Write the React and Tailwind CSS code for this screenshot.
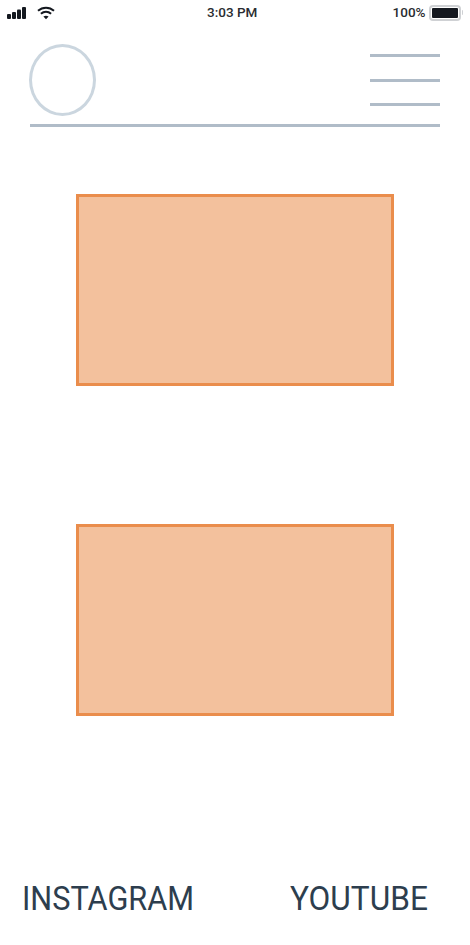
function SignalIcon() {
  return (
    <svg width="20" height="14" viewBox="0 0 20 14" fill="#14181f">
      <rect x="0" y="8" width="4" height="5" rx="1" />
      <rect x="5" y="6" width="4" height="7" rx="1" />
      <rect x="10" y="3.5" width="4" height="9.5" rx="1" />
      <rect x="15" y="1" width="4" height="12" rx="1" />
    </svg>
  )
}

function WifiIcon() {
  return (
    <svg width="18" height="14" viewBox="0 0 18 14" fill="none" stroke="#14181f" strokeWidth="2">
      <path d="M1 4.8C5.6 .6 12.4 .6 17 4.8" />
      <path d="M3.9 7.8C6.9 5.2 11.1 5.2 14.1 7.8" />
      <path d="M9 13.2 6.4 10.6C8 9.4 10 9.4 11.6 10.6Z" fill="#14181f" stroke="none" />
    </svg>
  )
}

function BatteryIcon() {
  return (
    <div className="flex items-center">
      <div className="h-[16px] w-[32px] rounded-[4px] border-2 border-[#cfd1d4] p-[1px]">
        <div className="h-full w-full rounded-[1px] bg-[#14181f]" />
      </div>
      <div className="ml-[1px] h-[5px] w-[1.5px] rounded-r bg-[#cfd1d4]" />
    </div>
  )
}

function OrangeBox() {
  return <div className="h-[192px] w-[318px] border-[3px] border-[#ea8d4c] bg-[#f3c19d]" />
}

export default function App() {
  return (
    <div className="flex h-[945px] w-[470px] flex-col overflow-hidden bg-white font-['Roboto',sans-serif]">
      {/* status bar */}
      <div className="relative flex h-[26px] items-center justify-between pl-[7px] pr-[7px] pb-[1px]">
        <div className="flex items-center gap-[10px]">
          <SignalIcon />
          <WifiIcon />
        </div>
        <span className="absolute left-[207px] text-[13.5px] font-medium text-[#2a2d31]">3:03 PM</span>
        <div className="flex items-center gap-[3px]">
          <span className="text-[13.5px] font-medium text-[#2a2d31]">100%</span>
          <BatteryIcon />
        </div>
      </div>

      {/* header */}
      <div className="mx-[30px] mt-[18px] flex h-[83px] items-start justify-between border-b-[3px] border-[#b0bcc8]">
        <div className="-ml-[1px] h-[72px] w-[67px] rounded-[50%] border-[3px] border-[#cbd6df]" />
        <div className="mt-[10px] flex h-[52px] w-[70px] flex-col justify-between">
          <div className="h-[3px] bg-[#b0bcc8]" />
          <div className="h-[3px] bg-[#b0bcc8]" />
          <div className="h-[3px] bg-[#b0bcc8]" />
        </div>
      </div>

      {/* boxes */}
      <div className="mt-[67px] ml-[76px] flex flex-col gap-[138px]">
        <OrangeBox />
        <OrangeBox />
      </div>

      {/* footer links */}
      <div className="mt-[161px] flex items-center justify-between pl-[22px] pr-[42px] text-[33px] leading-[44px] text-[#2d3e4e]">
        <span className="origin-left scale-x-[0.93]">INSTAGRAM</span>
        <span className="origin-right scale-x-[0.958]">YOUTUBE</span>
      </div>
    </div>
  )
}
